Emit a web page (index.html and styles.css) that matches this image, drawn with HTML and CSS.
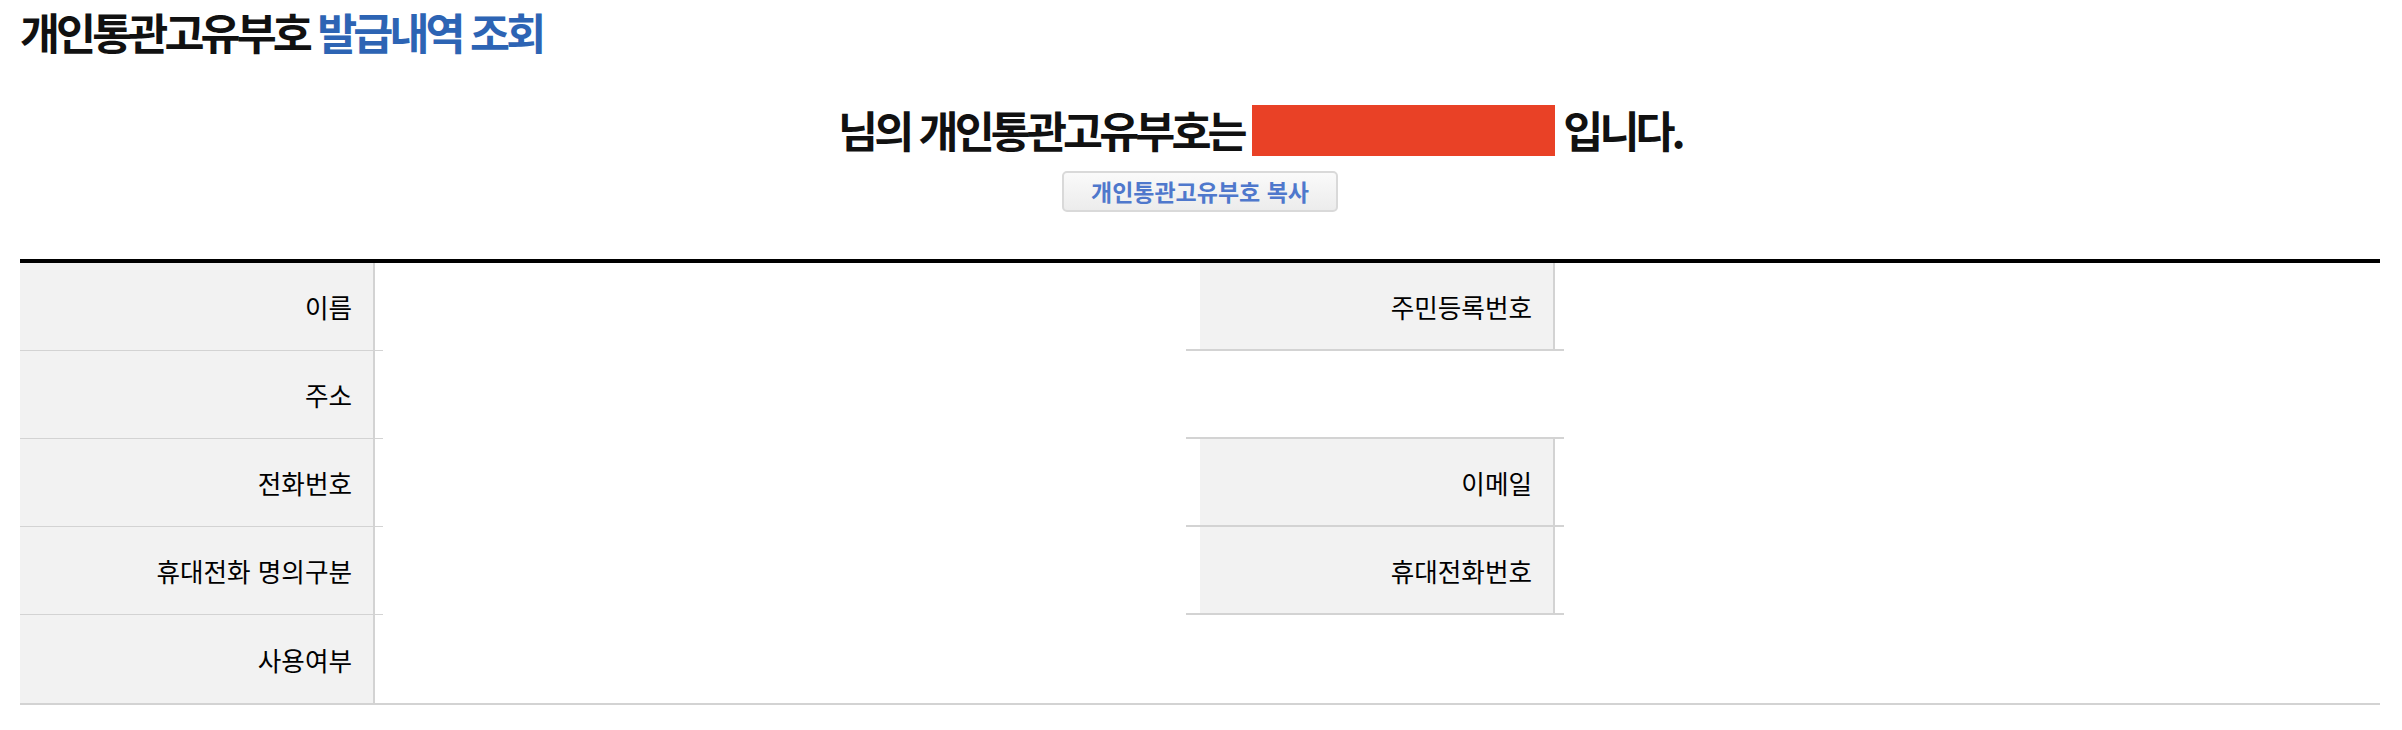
FILE: index.html
```html
<!DOCTYPE html>
<html lang="ko">
<head>
<meta charset="utf-8">
<title>개인통관고유부호 발급내역 조회</title>
<link rel="stylesheet" href="styles.css">
</head>
<body>
<div class="page">
  <h1 class="title">개인통관고유부호 <span class="title-accent">발급내역 조회</span></h1>

  <p class="notice"><span class="name"></span>님의 개인통관고유부호는 <span class="code-mask"></span> 입니다.</p>

  <div class="copy-row">
    <button type="button" class="copy-btn">개인통관고유부호 복사</button>
  </div>

  <div class="info-table">
    <div class="lh"><div class="th">이름</div></div>
    <div class="td"></div>
    <div class="rh"><div class="th">주민등록번호</div></div>
    <div class="td"></div>

    <div class="lh"><div class="th">주소</div></div>
    <div class="td"></div>
    <div class="rh rh-empty"></div>
    <div class="td"></div>

    <div class="lh"><div class="th">전화번호</div></div>
    <div class="td"></div>
    <div class="rh"><div class="th">이메일</div></div>
    <div class="td"></div>

    <div class="lh"><div class="th">휴대전화 명의구분</div></div>
    <div class="td"></div>
    <div class="rh"><div class="th">휴대전화번호</div></div>
    <div class="td"></div>

    <div class="lh lh-last"><div class="th">사용여부</div></div>
    <div class="td td-wide"></div>
  </div>
</div>
</body>
</html>
```

FILE: styles.css
```css
html, body {
  margin: 0;
  padding: 0;
  background: #ffffff;
}

body {
  font-family: "Noto Sans CJK KR", "Noto Sans", sans-serif;
  color: #111111;
}

.page {
  padding: 0 22px 0 20px;
}

.title {
  margin: 0;
  font-size: 43.5px;
  line-height: 64px;
  font-weight: 700;
  letter-spacing: -3.9px;
  color: #111111;
}

.title-accent {
  color: #2d64b4;
}

.notice {
  margin: 34px 0 0;
  text-align: center;
  font-size: 43.5px;
  line-height: 64px;
  font-weight: 700;
  letter-spacing: -3.9px;
  color: #111111;
}

.name {
  display: inline-block;
  width: 120px;
}

.code-mask {
  display: inline-block;
  width: 303px;
  height: 51px;
  background: #e94126;
  vertical-align: -8px;
}

.copy-row {
  margin-top: 9px;
  text-align: center;
}

.copy-btn {
  width: 276px;
  height: 41px;
  padding: 0;
  border: 2px solid #d9d9d9;
  border-radius: 5px;
  background: linear-gradient(#fafafa, #ececec);
  font-family: "Noto Sans CJK KR", "Noto Sans", sans-serif;
  font-size: 23px;
  font-weight: 700;
  color: #4f78cc;
  letter-spacing: 0;
  line-height: 37px;
}

.info-table {
  margin-top: 47px;
  display: grid;
  grid-template-columns: 363px 803px 378px 1fr;
  grid-auto-rows: 88px;
  border-top: 4px solid #000000;
  border-bottom: 2px solid #d3d3d3;
}

.lh {
  box-sizing: border-box;
  border-bottom: 1px solid #d3d3d3;
  padding-right: 8px;
  display: flex;
}

.lh-last {
  border-bottom: 0;
}

.rh {
  box-sizing: border-box;
  border-bottom: 2px solid #d3d3d3;
  padding: 0 9px 0 14px;
  display: flex;
}

.th {
  flex: 1;
  background: #f2f2f2;
  border-right: 2px solid #d3d3d3;
  display: flex;
  align-items: center;
  justify-content: flex-end;
  padding-right: 21px;
  font-size: 25.6px;
  color: #000000;
}

.td-wide {
  grid-column: span 3;
}
```
